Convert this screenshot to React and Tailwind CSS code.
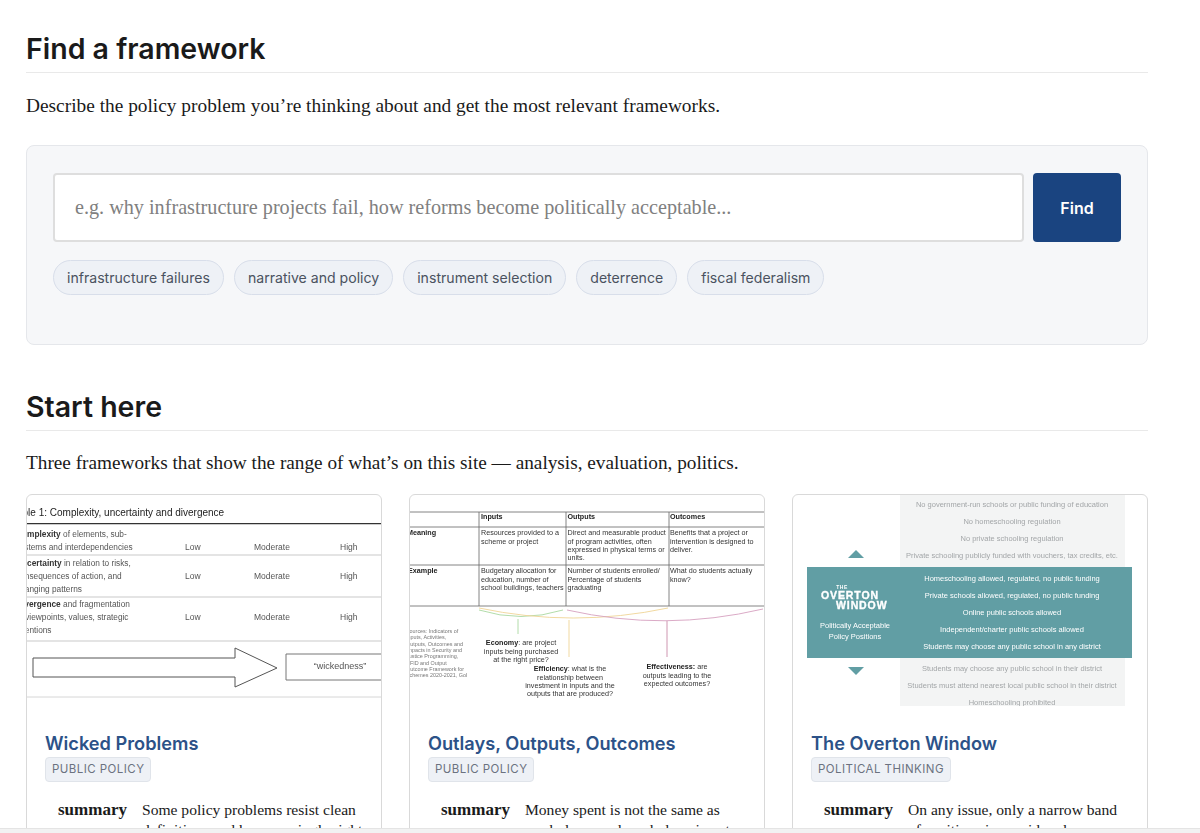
const SERIF = 'font-["Liberation_Serif",serif]'

const chips = ['infrastructure failures', 'narrative and policy', 'instrument selection', 'deterrence', 'fiscal federalism']

function Txt({ x, y, size = 8.3, fill = '#555', weight, anchor, children, spacing, stroke, strokeWidth }) {
  return (
    <text x={x} y={y} fontSize={size} fill={fill} fontWeight={weight} textAnchor={anchor} letterSpacing={spacing} stroke={stroke} strokeWidth={strokeWidth}>
      {children}
    </text>
  )
}

function WickedThumb() {
  const lows = [
    { y: 55, rule: 60 },
    { y: 84, rule: 102 },
    { y: 125, rule: 146 },
  ]
  return (
    <svg viewBox="0 0 354 215" className="block w-full h-[215px] font-['Liberation_Sans',sans-serif] blur-[0.3px]">
      <Txt x={-15} y={21} size={10} fill="#222">Table 1: Complexity, uncertainty and divergence</Txt>
      <line x1="0" x2="354" y1="28.7" y2="28.7" stroke="#333" strokeWidth="1.2" />
      <text x={-11} y={42} fontSize="8.3" fill="#555"><tspan fontWeight="bold" fill="#333">Complexity</tspan> of elements, sub-</text>
      <Txt x={-11} y={55}>systems and interdependencies</Txt>
      <text x={-11} y={71} fontSize="8.3" fill="#555"><tspan fontWeight="bold" fill="#333">Uncertainty</tspan> in relation to risks,</text>
      <Txt x={-11} y={84}>consequences of action, and</Txt>
      <Txt x={-11} y={97}>changing patterns</Txt>
      <text x={-11} y={112} fontSize="8.3" fill="#555"><tspan fontWeight="bold" fill="#333">Divergence</tspan> and fragmentation</text>
      <Txt x={-11} y={125}>of viewpoints, values, strategic</Txt>
      <Txt x={-11} y={138}>intentions</Txt>
      {lows.map((r) => (
        <g key={r.y}>
          <Txt x={158} y={r.y} size={8.5}>Low</Txt>
          <Txt x={227} y={r.y} size={8.5}>Moderate</Txt>
          <Txt x={313} y={r.y} size={8.5}>High</Txt>
          <line x1="0" x2="354" y1={r.rule} y2={r.rule} stroke="#bbb" strokeWidth="0.8" />
        </g>
      ))}
      <path d="M6 163H208V153L250 173L208 192V182H6Z" fill="#fff" stroke="#555" strokeWidth="1" />
      <path d="M360 159H259V185H360" fill="none" stroke="#777" strokeWidth="1" />
      <Txt x={313} y={174} anchor="middle" size={9}>“wickedness”</Txt>
      <line x1="0" x2="354" y1="202" y2="202" stroke="#ccc" strokeWidth="0.8" />
    </svg>
  )
}

function OutlaysThumb() {
  const cols = [
    { x: 71, head: 'Inputs', a: ['Resources provided to a', 'scheme or project'], b: ['Budgetary allocation for', 'education, number of', 'school buildings, teachers'] },
    { x: 157.5, head: 'Outputs', a: ['Direct and measurable product', 'of program activities, often', 'expressed in physical terms or', 'units.'], b: ['Number of students enrolled/', 'Percentage of students', 'graduating'] },
    { x: 260, head: 'Outcomes', a: ['Benefits that a project or', 'intervention is designed to', 'deliver.'], b: ['What do students actually', 'know?'] },
  ]
  const rowA = [40, 48.5, 57, 65]
  const rowB = [78, 86.5, 95]
  const sources = ['Sources: Indicators of', 'Inputs, Activities,', 'Outputs, Outcomes and', 'Impacts in Security and', 'Justice Programming,', 'DFID and Output', 'Outcome Framework for', 'Schemes 2020-2021, GoI']
  return (
    <svg viewBox="0 0 354 215" className="block w-full h-[215px] font-['Liberation_Sans',sans-serif] blur-[0.3px]">
      {[17, 32, 70, 111].map((y) => (
        <line key={y} x1="0" x2="354" y1={y} y2={y} stroke="#666" strokeWidth="0.8" />
      ))}
      {[69, 156, 259].map((x) => (
        <line key={x} x1={x} x2={x} y1="17" y2="111" stroke="#666" strokeWidth="0.8" />
      ))}
      <Txt x={-3} y={40} size={7.2} weight="bold" fill="#222">Meaning</Txt>
      <Txt x={-2} y={78} size={7.2} weight="bold" fill="#222">Example</Txt>
      {cols.map((c) => (
        <g key={c.head}>
          <Txt x={c.x} y={24} size={7.2} weight="bold" fill="#222">{c.head}</Txt>
          {c.a.map((t, i) => <Txt key={t} x={c.x} y={rowA[i]} size={7.2} fill="#333">{t}</Txt>)}
          {c.b.map((t, i) => <Txt key={t} x={c.x} y={rowB[i]} size={7.2} fill="#333">{t}</Txt>)}
        </g>
      ))}
      <path d="M69 115Q111 128 153 115" fill="none" stroke="#a9d8a0" strokeWidth="0.9" />
      <path d="M69 113Q163 133 258 113" fill="none" stroke="#efd596" strokeWidth="0.9" />
      <path d="M157 115Q255 137 353 114" fill="none" stroke="#d6a0c0" strokeWidth="0.9" />
      <line x1="108" x2="108" y1="124" y2="139" stroke="#a9d8a0" strokeWidth="0.9" />
      <line x1="159" x2="159" y1="125" y2="162" stroke="#efd596" strokeWidth="0.9" />
      <line x1="257" x2="257" y1="126" y2="162" stroke="#c98aa8" strokeWidth="0.9" />
      {sources.map((t, i) => (
        <Txt key={t} x={-4} y={138 + i * 6.3} size={5.4} fill="#777">{t}</Txt>
      ))}
      <text x={111} y={150} fontSize="7.2" fill="#333" textAnchor="middle"><tspan fontWeight="bold" fill="#222">Economy</tspan>: are project</text>
      <Txt x={111} y={158.5} size={7.2} fill="#333" anchor="middle">inputs being purchased</Txt>
      <Txt x={111} y={166.5} size={7.2} fill="#333" anchor="middle">at the right price?</Txt>
      <text x={160} y={176} fontSize="7.2" fill="#333" textAnchor="middle"><tspan fontWeight="bold" fill="#222">Efficiency</tspan>: what is the</text>
      <Txt x={160} y={184.5} size={7.2} fill="#333" anchor="middle">relationship between</Txt>
      <Txt x={160} y={193} size={7.2} fill="#333" anchor="middle">investment in inputs and the</Txt>
      <Txt x={160} y={201} size={7.2} fill="#333" anchor="middle">outputs that are produced?</Txt>
      <text x={267} y={174} fontSize="7.2" fill="#333" textAnchor="middle"><tspan fontWeight="bold" fill="#222">Effectiveness:</tspan> are</text>
      <Txt x={267} y={182.5} size={7.2} fill="#333" anchor="middle">outputs leading to the</Txt>
      <Txt x={267} y={191} size={7.2} fill="#333" anchor="middle">expected outcomes?</Txt>
    </svg>
  )
}

function OvertonThumb() {
  const above = ['No government-run schools or public funding of education', 'No homeschooling regulation', 'No private schooling regulation', 'Private schooling publicly funded with vouchers, tax credits, etc.']
  const inside = ['Homeschooling allowed, regulated, no public funding', 'Private schools allowed, regulated, no public funding', 'Online public schools allowed', 'Independent/charter public schools allowed', 'Students may choose any public school in any district']
  const below = ['Students may choose any public school in their district', 'Students must attend nearest local public school in their district', 'Homeschooling prohibited']
  return (
    <svg viewBox="0 0 354 215" className="block w-full h-[215px] font-['Liberation_Sans',sans-serif] blur-[0.3px]">
      <defs>
        <clipPath id="overton-clip"><rect x="0" y="0" width="354" height="211" /></clipPath>
      </defs>
      <g clipPath="url(#overton-clip)">
        <rect x="107" y="0" width="225" height="211" fill="#f3f4f4" />
        <rect x="14" y="72" width="325" height="91" fill="#619ea4" />
        {above.map((t, i) => <Txt key={t} x={219} y={12 + i * 17} size={7.5} fill="#a3a6a8" anchor="middle">{t}</Txt>)}
        {inside.map((t, i) => <Txt key={t} x={219} y={86 + i * 17} size={7.5} fill="#fff" anchor="middle">{t}</Txt>)}
        {below.map((t, i) => <Txt key={t} x={219} y={176 + i * 17} size={7.5} fill="#a3a6a8" anchor="middle">{t}</Txt>)}
        <path d="M63 55L71 63H55Z" fill="#619ea4" />
        <path d="M55 172H71L63 180Z" fill="#619ea4" />
        <Txt x={49} y={94} size={5} weight="bold" fill="#fff" anchor="middle" spacing="0.5">THE</Txt>
        <Txt x={28} y={104} size={10.5} weight="bold" fill="#fff" spacing="0.9" stroke="#fff" strokeWidth="0.35">OVERTON</Txt>
        <Txt x={43} y={114} size={10.5} weight="bold" fill="#fff" spacing="0.9" stroke="#fff" strokeWidth="0.35">WINDOW</Txt>
        <Txt x={62} y={133} size={7.5} fill="#fff" anchor="middle">Politically Acceptable</Txt>
        <Txt x={62} y={144} size={7.5} fill="#fff" anchor="middle">Policy Positions</Txt>
      </g>
    </svg>
  )
}

const cards = [
  { title: 'Wicked Problems', tag: 'PUBLIC POLICY', thumb: <WickedThumb />, text: ['Some policy problems resist clean', 'definitions and have no single right'] },
  { title: 'Outlays, Outputs, Outcomes', tag: 'PUBLIC POLICY', thumb: <OutlaysThumb />, text: ['Money spent is not the same as', 'work done, and work done is not'] },
  { title: 'The Overton Window', tag: 'POLITICAL THINKING', thumb: <OvertonThumb />, text: ['On any issue, only a narrow band', 'of positions is considered'] },
]

function Card({ card }) {
  return (
    <div className="bg-white border border-[#d9d9d9] rounded-t-md overflow-hidden h-[400px]">
      {card.thumb}
      <div className="px-[18px] pt-[21px]">
        <h3 className="text-[18.2px] leading-[24px] font-semibold text-[#2c5288]">{card.title}</h3>
        <span className="inline-block px-[6px] h-[25px] leading-[23px] bg-[#eef1f6] border border-[#e0e4ea] rounded text-[11.5px] tracking-[0.45px] text-[#6b7280]">
          {card.tag}
        </span>
        <div className={`mt-[18px] pl-[13px] flex items-baseline gap-[15px] whitespace-nowrap text-[15.6px] leading-[20px] text-[#1a1a1a] ${SERIF}`}>
          <span className="font-bold text-[17px]">summary</span>
          <div>
            {card.text.map((t) => <div key={t}>{t}</div>)}
          </div>
        </div>
      </div>
    </div>
  )
}

export default function App() {
  return (
    <div className="relative h-[833px] overflow-hidden bg-white font-['Inter',sans-serif] text-[#1a1a1a]">
      <div className="ml-[26px] w-[1122px] pt-[30px]">
        <h2 className="text-[28.5px] leading-[38px] font-semibold pb-[4px] border-b border-[#e9e9e9]">Find a framework</h2>
        <p className={`mt-[21px] text-[19.36px] leading-[24px] ${SERIF}`}>
          Describe the policy problem you’re thinking about and get the most relevant frameworks.
        </p>

        <div className="mt-[27px] h-[200px] px-[26px] pt-[27px] bg-[#f6f7f9] border border-[#e5e7eb] rounded-lg">
          <div className="flex gap-[9px]">
            <input
              className={`flex-1 h-[69px] px-[20px] bg-white border-2 border-[#dedede] rounded text-[20.2px] outline-none placeholder:text-[#808080] ${SERIF}`}
              placeholder="e.g. why infrastructure projects fail, how reforms become politically acceptable..."
            />
            <button className="w-[88px] h-[69px] bg-[#1a4480] rounded text-white text-[16px] font-semibold">Find</button>
          </div>
          <div className="flex gap-[10px] mt-[18px]">
            {chips.map((c) => (
              <span key={c} className="h-[35px] px-[13px] leading-[33px] bg-[#eef1f6] border border-[#d8deea] rounded-full text-[14.1px] text-[#4a5260]">
                {c}
              </span>
            ))}
          </div>
        </div>

        <h2 className="mt-[43px] text-[28.5px] leading-[38px] font-semibold pb-[4px] border-b border-[#e9e9e9]">Start here</h2>
        <p className={`mt-[20px] text-[19.25px] leading-[24px] ${SERIF}`}>
          Three frameworks that show the range of what’s on this site — analysis, evaluation, politics.
        </p>

        <div className="grid grid-cols-3 gap-[27px] mt-[19px]">
          {cards.map((c) => <Card key={c.title} card={c} />)}
        </div>
      </div>
      <div className="absolute bottom-0 inset-x-0 h-[5px] bg-[#f2f2f2] border-t border-[#e4e4e4]" />
    </div>
  )
}
